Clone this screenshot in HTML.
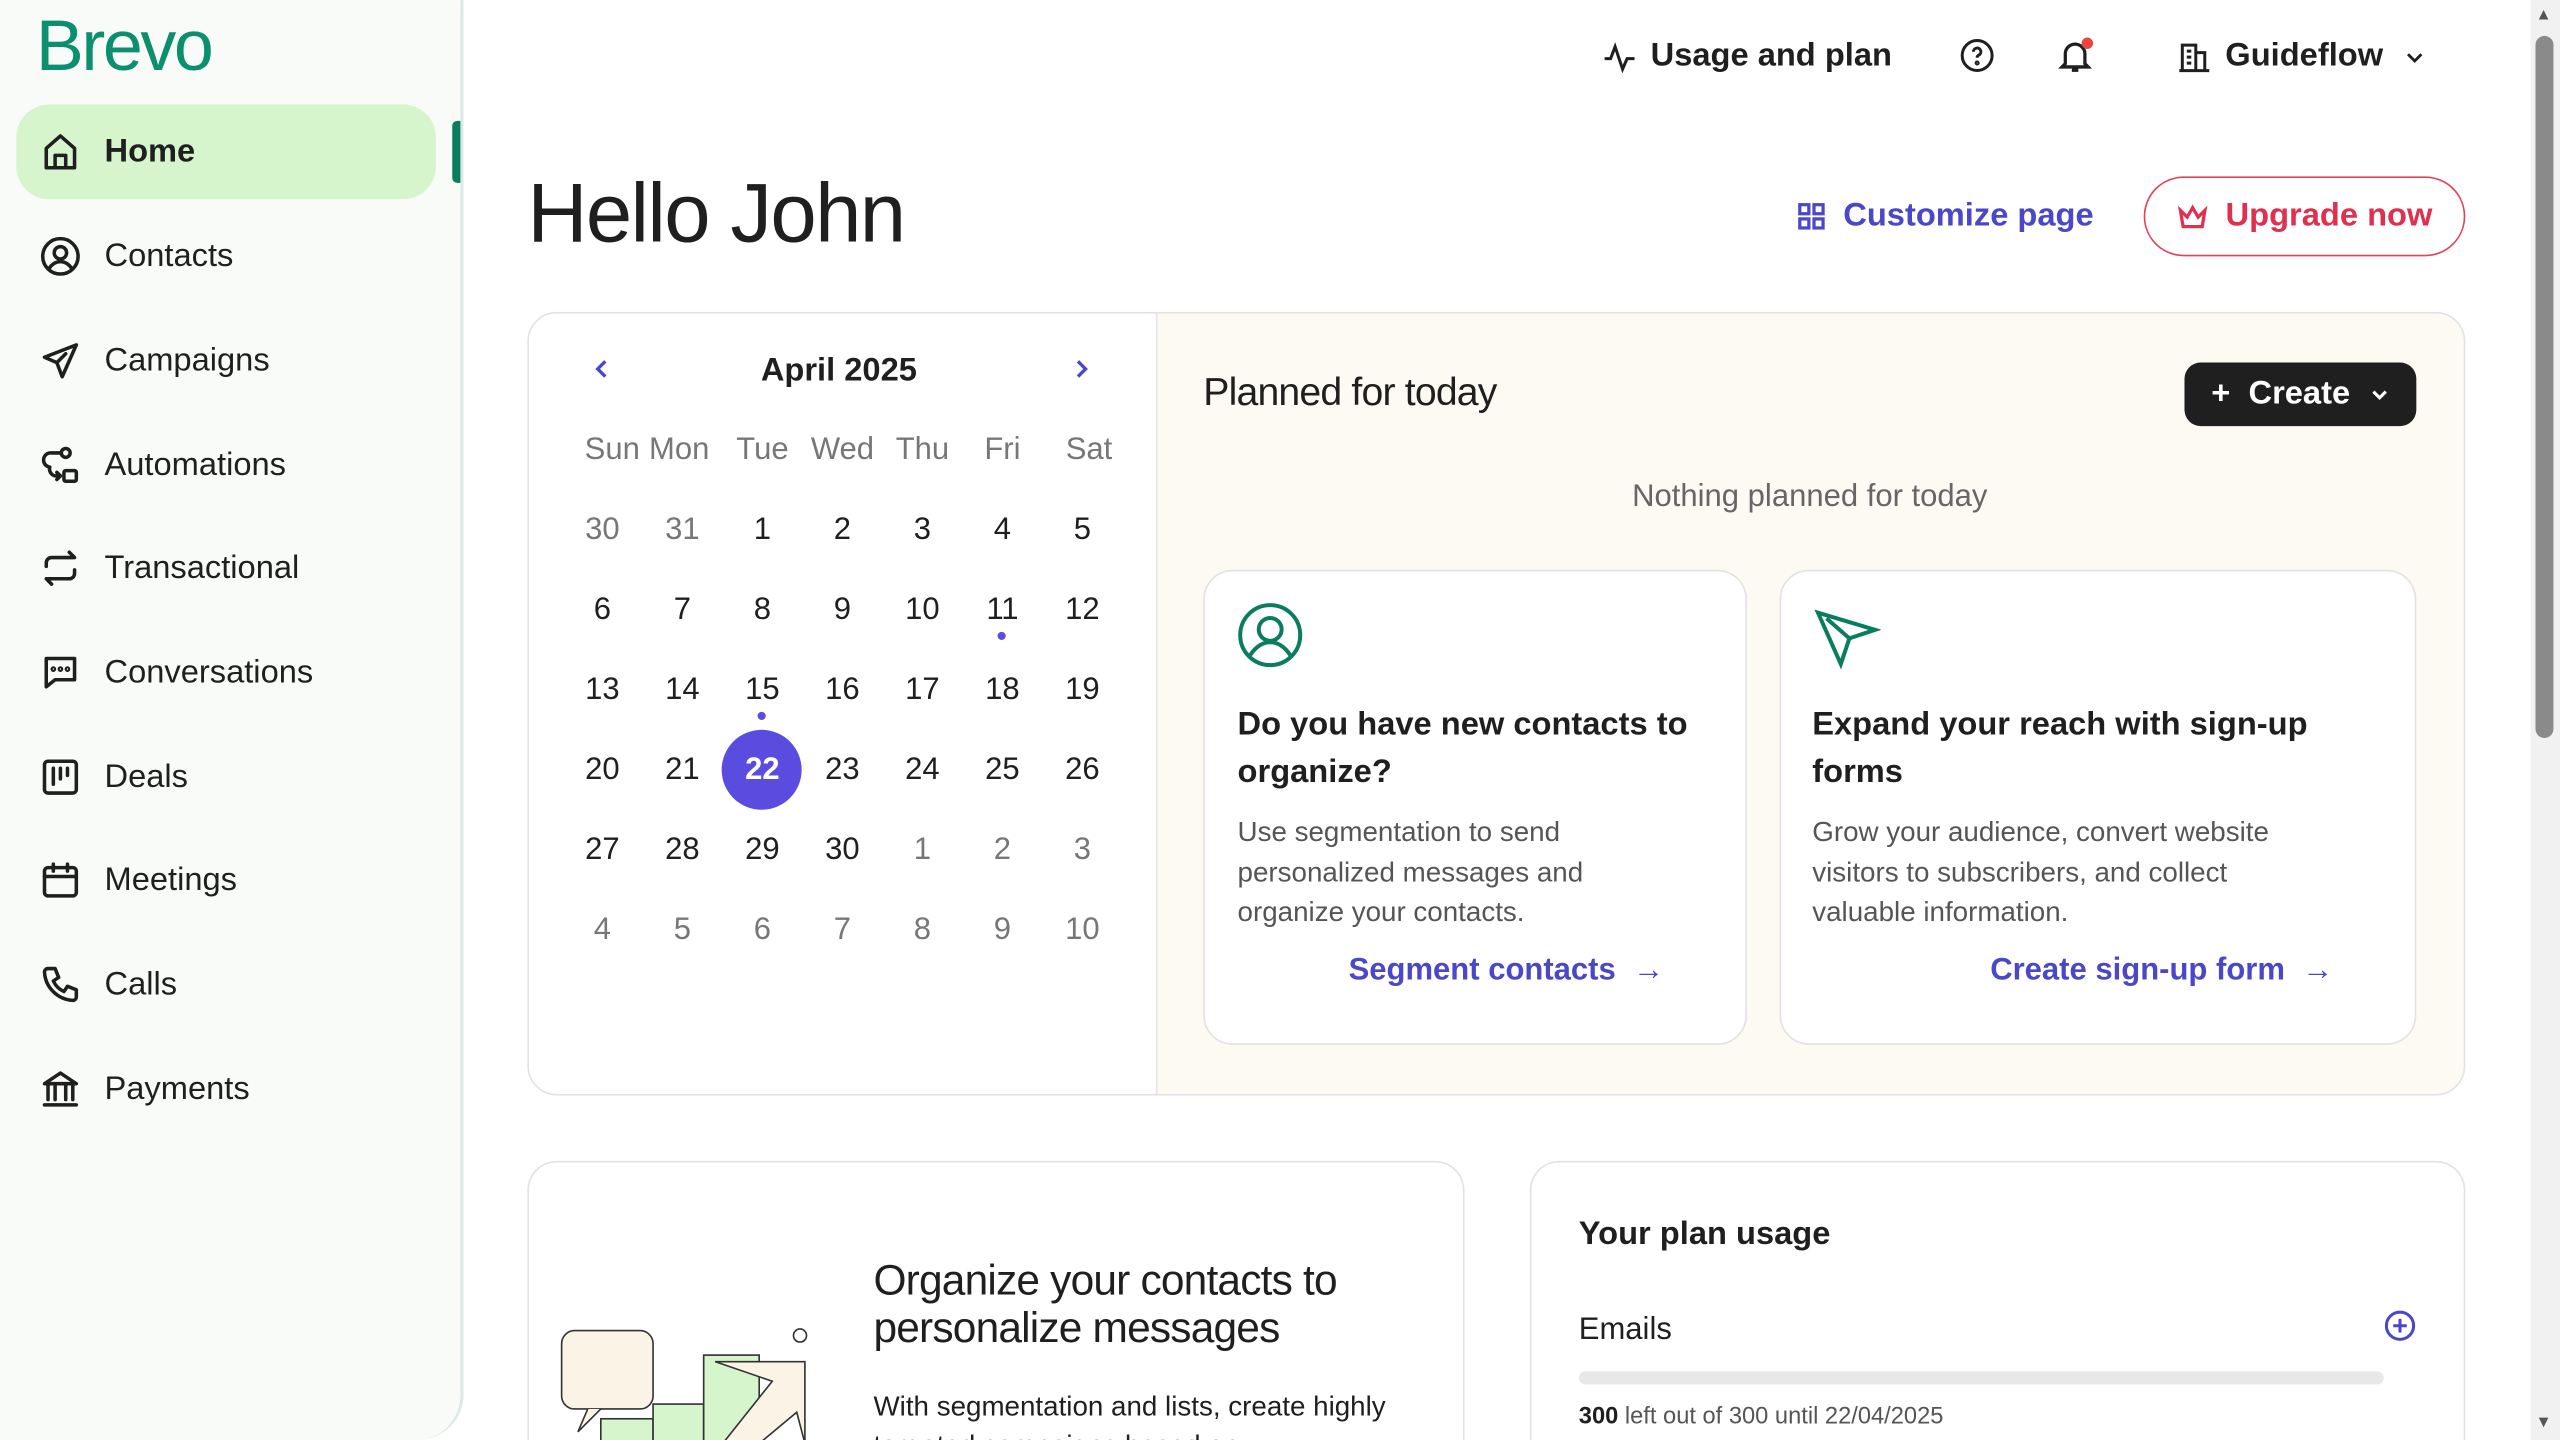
<!DOCTYPE html>
<html><head><meta charset="utf-8"><style>
*{margin:0;padding:0;box-sizing:border-box}
html,body{width:2560px;height:1440px;overflow:hidden;background:#fff}
#w{position:absolute;left:0;top:0;width:1568px;height:882px;overflow:hidden;transform:scale(1.632653);transform-origin:0 0;font-family:"Liberation Sans",sans-serif;color:#1f1f1f}
.a{position:absolute}
.side{left:0;top:0;width:284px;height:882px;background:#f9fbf8;border-right:2px solid #dde9e6;border-bottom-right-radius:28px}
.nav{left:10px;width:257px;height:58px;border-radius:20px;display:flex;align-items:center;padding-left:14px;font-size:20px}
.nav svg{width:26px;height:26px;margin-right:14px;fill:none;stroke:#1f1f1f;stroke-width:2;stroke-linecap:round;stroke-linejoin:round}
.c{width:40px;text-align:center;font-size:19px;color:#1f1f1f}
.g{color:#777}
.card{background:#fff;border:1px solid #e2e2e2;border-radius:18px}
.lnk{color:#4a47c9;font-weight:bold;font-size:19px}
</style></head><body><div id="w">
<div class="a side"></div>
<div class="a" style="left:22px;top:4px;font-size:44px;color:#0b8f6e;letter-spacing:-1.5px">Brevo</div>
<div class="a" style="left:277px;top:74px;width:5px;height:38px;background:#0b7d5f;border-radius:3px 0 0 3px"></div>
<div class="a nav" style="top:64px;background:#d6f5cc;font-weight:bold"><svg viewBox="0 0 24 24"><path d="M4 21V10l8-7 8 7v11H4zM9 21v-7h6v7"/></svg>Home</div>
<div class="a nav" style="top:128px"><svg viewBox="0 0 24 24"><circle cx="12" cy="12" r="10"/><circle cx="12" cy="10" r="3.5"/><path d="M5.5 19c2-3 4-4 6.5-4s4.5 1 6.5 4"/></svg>Contacts</div>
<div class="a nav" style="top:192px"><svg viewBox="0 0 24 24"><path d="M21 3L3 10l7 3 3 8 8-18zM10 13l5-5"/></svg>Campaigns</div>
<div class="a nav" style="top:256px"><svg viewBox="0 0 24 24"><circle cx="15" cy="5" r="2.5"/><rect x="14" y="15" width="7" height="6" rx="1"/><path d="M12 5H7a4 4 0 0 0-1 8 4 4 0 0 0 3 5h3M10 16l2 2-2 2"/></svg>Automations</div>
<div class="a nav" style="top:319px"><svg viewBox="0 0 24 24"><path d="M4 11V9a3 3 0 0 1 3-3h13l-3-3M20 13v2a3 3 0 0 1-3 3H4l3 3"/></svg>Transactional</div>
<div class="a nav" style="top:383px"><svg viewBox="0 0 24 24"><path d="M4 4h16v12H9l-5 4z"/><circle cx="8" cy="10" r=".6"/><circle cx="12" cy="10" r=".6"/><circle cx="16" cy="10" r=".6"/></svg>Conversations</div>
<div class="a nav" style="top:447px"><svg viewBox="0 0 24 24"><rect x="3" y="3" width="18" height="18" rx="2"/><path d="M8 7v9M12 7v6M16 7v4"/></svg>Deals</div>
<div class="a nav" style="top:510px"><svg viewBox="0 0 24 24"><rect x="3" y="5" width="18" height="16" rx="2"/><path d="M3 10h18M8 3v4M16 3v4"/></svg>Meetings</div>
<div class="a nav" style="top:574px"><svg viewBox="0 0 24 24"><path d="M5 3h4l2 5-3 2a12 12 0 0 0 6 6l2-3 5 2v4a2 2 0 0 1-2 2A17 17 0 0 1 3 5a2 2 0 0 1 2-2z"/></svg>Calls</div>
<div class="a nav" style="top:638px"><svg viewBox="0 0 24 24"><path d="M3 9l9-6 9 6zM5 10v8M9 10v8M15 10v8M19 10v8M3 21h18"/></svg>Payments</div>

<!-- top bar -->
<div class="a" style="left:981px;top:23px;font-size:20px;font-weight:bold;display:flex;align-items:center"><svg width="22" height="22" viewBox="0 0 24 24" fill="none" stroke="#1f1f1f" stroke-width="2"><path d="M2 13h4l3-8 5 15 3-7h5"/></svg><span style="margin-left:8px">Usage and plan</span></div>
<svg class="a" style="left:1200px;top:23px" width="22" height="22" viewBox="0 0 24 24" fill="none" stroke="#1f1f1f" stroke-width="2"><circle cx="12" cy="12" r="10"/><path d="M9.5 9.5a2.5 2.5 0 1 1 3.5 2.3c-.7.3-1 .8-1 1.7"/><circle cx="12" cy="17" r=".7"/></svg>
<svg class="a" style="left:1259px;top:22px" width="24" height="24" viewBox="0 0 24 24" fill="none" stroke="#1f1f1f" stroke-width="2"><path d="M6 17V11a6 6 0 0 1 12 0v6l2 2H4zM10 21h4"/></svg>
<div class="a" style="left:1275px;top:23px;width:7px;height:7px;border-radius:50%;background:#e8473d"></div>
<div class="a" style="left:1333px;top:23px;font-size:20px;font-weight:bold;display:flex;align-items:center"><svg width="22" height="22" viewBox="0 0 24 24" fill="none" stroke="#1f1f1f" stroke-width="2"><path d="M4 21V4h9v17M13 9h6v12M2 21h20M7 8h3M7 12h3M7 16h3"/></svg><span style="margin-left:8px">Guideflow</span><svg style="margin-left:12px" width="14" height="14" viewBox="0 0 24 24" fill="none" stroke="#1f1f1f" stroke-width="3"><path d="M5 9l7 7 7-7"/></svg></div>

<div class="a" style="left:323px;top:101px;font-size:51px;letter-spacing:-1px">Hello John</div>
<div class="a" style="left:1100px;top:121px;font-size:20px;font-weight:bold;color:#4a47c9;display:flex;align-items:center"><svg width="19" height="19" viewBox="0 0 24 24" fill="none" stroke="#4a47c9" stroke-width="2.5"><rect x="3" y="3" width="7" height="7"/><rect x="14" y="3" width="7" height="7"/><rect x="3" y="14" width="7" height="7"/><rect x="14" y="14" width="7" height="7"/></svg><span style="margin-left:10px">Customize page</span></div>
<div class="a" style="left:1313px;top:108px;width:197px;height:49px;border:1.5px solid #e5405a;border-radius:25px;color:#e0304f;font-size:20px;font-weight:bold;display:flex;align-items:center;justify-content:center"><svg width="20" height="18" viewBox="0 0 24 20" fill="none" stroke="#e0304f" stroke-width="2.4"><path d="M3 5l5 5 4-7 4 7 5-5-2 12H5z"/></svg><span style="margin-left:10px">Upgrade now</span></div>

<!-- calendar card -->
<div class="a card" style="left:323px;top:191px;width:1187px;height:480px;overflow:hidden">
<div class="a" style="left:384px;top:0;width:803px;height:480px;background:#fdf9f3;border-left:1px solid #e6e6e6"></div>
</div>
<svg class="a" style="left:362px;top:219px" width="14" height="14" viewBox="0 0 24 24" fill="none" stroke="#4a47c9" stroke-width="3.5"><path d="M15 4l-8 8 8 8"/></svg>
<svg class="a" style="left:655px;top:219px" width="14" height="14" viewBox="0 0 24 24" fill="none" stroke="#4a47c9" stroke-width="3.5"><path d="M9 4l8 8-8 8"/></svg>
<div class="a" style="left:466px;top:216px;font-size:20px;font-weight:bold">April 2025</div>
<div id="cal"></div>
<div class="a" style="left:442px;top:447px;width:49px;height:49px;border-radius:50%;background:#5b4ce0"></div>
<div class="a" style="left:611px;top:387px;width:5px;height:5px;border-radius:50%;background:#5b4ce0"></div>
<div class="a" style="left:464px;top:436px;width:5px;height:5px;border-radius:50%;background:#5b4ce0"></div>

<div class="a" style="left:737px;top:227px;font-size:24px;letter-spacing:-.5px">Planned for today</div>
<div class="a" style="left:1338px;top:222px;width:142px;height:39px;background:#1f1f1f;border-radius:10px;color:#fff;font-size:20px;font-weight:bold;display:flex;align-items:center;justify-content:center">+&nbsp; Create &nbsp;<svg width="13" height="13" viewBox="0 0 24 24" fill="none" stroke="#fff" stroke-width="3.5"><path d="M5 9l7 7 7-7"/></svg></div>
<div class="a" style="left:737px;top:294px;width:743px;text-align:center;font-size:19px;color:#666">Nothing planned for today</div>

<div class="a card" style="left:737px;top:349px;width:333px;height:291px"></div>
<svg class="a" style="left:757px;top:368px" width="42" height="42" viewBox="0 0 24 24" fill="none" stroke="#0b7d5f" stroke-width="1.4"><circle cx="12" cy="12" r="10.5"/><circle cx="12" cy="10" r="4"/><path d="M5 19c2-3 4.5-4.5 7-4.5s5 1.5 7 4.5"/></svg>
<div class="a" style="left:758px;top:430px;width:300px;font-size:20px;font-weight:bold;line-height:29px">Do you have new contacts to organize?</div>
<div class="a" style="left:758px;top:498px;width:275px;font-size:17px;color:#555;line-height:24.5px">Use segmentation to send personalized messages and organize your contacts.</div>
<div class="a lnk" style="left:826px;top:584px">Segment contacts &nbsp;→</div>

<div class="a card" style="left:1090px;top:349px;width:390px;height:291px"></div>
<svg class="a" style="left:1110px;top:370px" width="42" height="42" viewBox="0 0 24 24" fill="none" stroke="#0b7d5f" stroke-width="1.4"><path d="M2 3l20 6-9 3-3 9zM13 12l-8-7"/></svg>
<div class="a" style="left:1110px;top:430px;width:340px;font-size:20px;font-weight:bold;line-height:29px">Expand your reach with sign-up forms</div>
<div class="a" style="left:1110px;top:498px;width:310px;font-size:17px;color:#555;line-height:24.5px">Grow your audience, convert website visitors to subscribers, and collect valuable information.</div>
<div class="a lnk" style="left:1219px;top:584px">Create sign-up form &nbsp;→</div>

<!-- bottom cards -->
<div class="a card" style="left:323px;top:711px;width:574px;height:200px"></div>
<svg class="a" style="left:340px;top:808px" width="160" height="74" viewBox="0 0 160 74"><rect x="4" y="7" width="56" height="48" rx="8" fill="#fbf3e6" stroke="#333"/><path d="M20 55l-6 14 14-14" fill="#fbf3e6" stroke="#333"/><rect x="28" y="61" width="32" height="20" fill="#d6f5cc" stroke="#333"/><rect x="60" y="52" width="31" height="30" fill="#d6f5cc" stroke="#333"/><rect x="91" y="22" width="34" height="60" fill="#d6f5cc" stroke="#333"/><path d="M98 26h55v50l-5-19-30 25h-20l35-44z" fill="#fbf3e6" stroke="#333"/><circle cx="150" cy="10" r="4" fill="none" stroke="#333"/></svg>
<div class="a" style="left:535px;top:770px;font-size:26px;line-height:29px;letter-spacing:-.5px">Organize your contacts to<br>personalize messages</div>
<div class="a" style="left:535px;top:850px;font-size:17px;line-height:24px">With segmentation and lists, create highly<br>targeted campaigns based on</div>

<div class="a card" style="left:937px;top:711px;width:573px;height:200px"></div>
<div class="a" style="left:967px;top:745px;font-size:20px;font-weight:bold">Your plan usage</div>
<div class="a" style="left:967px;top:804px;font-size:19px">Emails</div>
<svg class="a" style="left:1460px;top:802px" width="20" height="20" viewBox="0 0 24 24" fill="none" stroke="#4a47c9" stroke-width="2.2"><circle cx="12" cy="12" r="10"/><path d="M12 7v10M7 12h10"/></svg>
<div class="a" style="left:967px;top:840px;width:493px;height:8px;border-radius:4px;background:#e8e8e8"></div>
<div class="a" style="left:967px;top:860px;font-size:14.5px;color:#555"><b style="color:#1f1f1f">300</b> left out of 300 until 22/04/2025</div>

<!-- scrollbar -->
<div class="a" style="left:1550px;top:0;width:18px;height:882px;background:#f1f1f1"></div>
<div class="a" style="left:1553px;top:22px;width:11px;height:430px;border-radius:6px;background:#8a8a8a"></div>
<div class="a" style="left:1553px;top:4px;font-size:10px;color:#555">▲</div>
<div class="a" style="left:1553px;top:866px;font-size:10px;color:#555">▼</div>
</div>
<script>
var xs=[369,418,467,516,565,614,663],h="";
var hd=["Sun","Mon","Tue","Wed","Thu","Fri","Sat"];
hd.forEach(function(d,i){h+='<div class="a c g" style="left:'+(xs[i]-22+(i==6?4:0)+(i==0?6:0)+(i==1?-2:0))+'px;top:265px;width:44px">'+d+'</div>';});
var rows=[[30,31,1,2,3,4,5],[6,7,8,9,10,11,12],[13,14,15,16,17,18,19],[20,21,22,23,24,25,26],[27,28,29,30,1,2,3],[4,5,6,7,8,9,10]];
rows.forEach(function(r,ri){r.forEach(function(n,ci){var gr=(ri==0&&ci<2)||(ri==4&&ci>3)||ri==5;var sel=(ri==3&&ci==2);
h+='<div class="a c'+(gr?' g':'')+'" style="left:'+(xs[ci]-20)+'px;top:'+(314+ri*49)+'px;z-index:2;'+(sel?'color:#fff;font-weight:bold;':'')+'">'+n+'</div>';});});
document.getElementById('cal').outerHTML=h;
</script>
</body></html>
